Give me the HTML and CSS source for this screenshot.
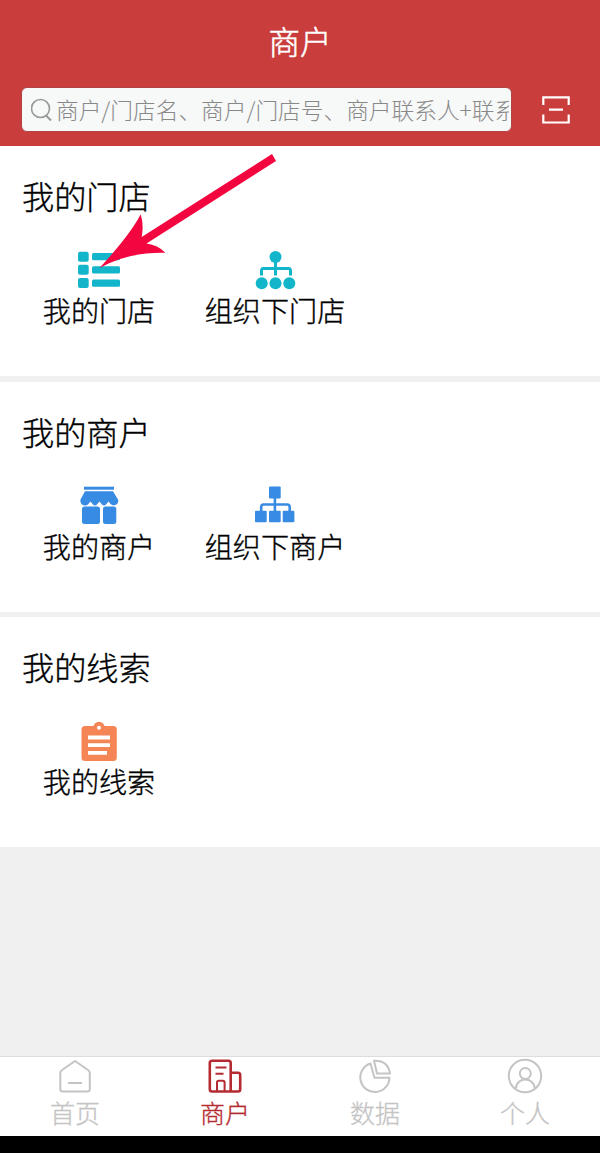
FILE: index.html
```html
<!DOCTYPE html>
<html lang="zh-CN">
<head>
  <meta charset="UTF-8">
  <title>商户</title>
  <link rel="stylesheet" href="styles.css">
</head>
<body>

  <header class="header">
    <h1>商户</h1>
    <div class="search-row">
      <div class="search">
        <svg class="search-icon" width="22" height="24" viewBox="0 0 22 24" fill="none" stroke="#999" stroke-width="1.6">
          <circle cx="9.500" cy="10.500" r="9"/>
          <path d="M15 17.500l5 5" stroke-width="2"/>
        </svg>
        <span class="placeholder">商户/门店名、商户/门店号、商户联系人+联系</span>
      </div>
      <svg class="scan" width="28" height="28" viewBox="0 0 28 28" fill="none" stroke="#fff" stroke-width="2.2">
        <path d="M1.300 9V1.300h25.400V9M1.300 18.500v8h25.400v-8M7 13.700h14"/>
      </svg>
    </div>
  </header>

  <main>
    <section class="card">
      <h2>我的门店</h2>
      <div class="menu">
        <div class="item">
          <svg width="48" height="40" viewBox="0 0 48 40" fill="#12b5c9">
            <rect x="3" y="1.700" width="10.700" height="10" rx="2"/>
            <rect x="3" y="14.800" width="10.700" height="10" rx="2"/>
            <rect x="3" y="28" width="10.700" height="10" rx="2"/>
            <rect x="17" y="3" width="28" height="7.300" rx="1.500"/>
            <rect x="17" y="16.300" width="28" height="7.300" rx="1.500"/>
            <rect x="17" y="29.500" width="28" height="7.300" rx="1.500"/>
          </svg>
          <span>我的门店</span>
        </div>
        <div class="item">
          <svg width="48" height="40" viewBox="0 0 48 40" fill="#12b5c9">
            <circle cx="24.500" cy="7" r="6"/>
            <circle cx="10.700" cy="33.300" r="6"/>
            <circle cx="24.500" cy="33.300" r="6"/>
            <circle cx="38.300" cy="33.300" r="6"/>
            <path d="M24.500 10v15.500M10.500 25.500v-5q0-2 2-2h25q2 0 2 2v5" fill="none" stroke="#12b5c9" stroke-width="3"/>
          </svg>
          <span>组织下门店</span>
        </div>
      </div>
    </section>

    <section class="card">
      <h2>我的商户</h2>
      <div class="menu">
        <div class="item">
          <svg width="48" height="40" viewBox="0 0 48 40" fill="#378be2">
            <rect x="9" y=".700" width="30" height="3"/>
            <path d="M10 5.300h28l5 8.200c1.500 4-3.500 8-7.500 4.500l-2-2.500-2.500 3q-2 1.800-4 0l-2.500-3-2.500 3q-2 1.800-4 0l-2.500-3-2.500 3c-4 3-8.500-1-7.500-5z"/>
            <rect x="7" y="20.500" width="18" height="17.500" rx="2.500"/>
            <rect x="28" y="20.500" width="13.300" height="17.500" rx="2.500"/>
          </svg>
          <span>我的商户</span>
        </div>
        <div class="item">
          <svg width="48" height="40" viewBox="0 0 48 40" fill="#378be2">
            <rect x="18" y=".500" width="11.700" height="12" rx="1"/>
            <rect x="4" y="24.800" width="11.700" height="11.500" rx="1"/>
            <rect x="18" y="24.800" width="11.700" height="11.500" rx="1"/>
            <rect x="31.700" y="24.800" width="11.700" height="11.500" rx="1"/>
            <path d="M23.900 12v14M10.200 26v-5q0-2.500 2.500-2.500h23.500q2.500 0 2.500 2.500v5" fill="none" stroke="#378be2" stroke-width="2.600"/>
          </svg>
          <span>组织下商户</span>
        </div>
      </div>
    </section>

    <section class="card">
      <h2>我的线索</h2>
      <div class="menu">
        <div class="item">
          <svg width="48" height="40" viewBox="0 0 48 40" fill="#f58555">
            <circle cx="24" cy="6.500" r="5.700"/>
            <rect x="6.500" y="5" width="35.300" height="35" rx="3.500"/>
            <circle cx="24" cy="6.800" r="2" fill="#fff"/>
            <path d="M13 16.500h22M13 24.200h22M13 31.900h19" stroke="#fff" stroke-width="3.800"/>
          </svg>
          <span>我的线索</span>
        </div>
      </div>
    </section>
  </main>

  <nav class="tabs">
    <div class="tab">
      <svg width="36" height="36" viewBox="0 0 36 36" fill="none" stroke="currentColor" stroke-width="2">
        <path d="M18 3l13 9q1.800 1.300 1.800 3v16q0 2.500-2.500 2.500h-24.500q-2.500 0-2.500-2.500V15q0-1.700 1.700-3zM11 25h14" stroke-linejoin="round"/>
      </svg>
      <span>首页</span>
    </div>
    <div class="tab active">
      <svg width="36" height="36" viewBox="0 0 36 36" fill="none" stroke="currentColor" stroke-width="2.600">
        <path d="M23.700 33.500V5q0-2.200-2.200-2.200h-16.500q-2.200 0-2.200 2.200v26.300q0 2.200 2.200 2.200h26q2.200 0 2.200-2.200V17q0-2.200-2.200-2.200h-7"/>
        <path d="M8.500 9.500h11M8.500 15.700h8M10 33v-8.500q0-1.800 1.800-1.800h4q1.800 0 1.800 1.800V33" stroke-width="2"/>
      </svg>
      <span>商户</span>
    </div>
    <div class="tab">
      <svg width="36" height="36" viewBox="0 0 36 36" fill="none" stroke="currentColor" stroke-width="2" stroke-linejoin="round">
        <path d="M13.500 5.500A14.600 14.600 0 1 0 32.500 19.800H17.500z"/>
        <path d="M17 2.700Q31 2 33 15.500H20z"/>
      </svg>
      <span>数据</span>
    </div>
    <div class="tab">
      <svg width="36" height="36" viewBox="0 0 36 36" fill="none" stroke="currentColor" stroke-width="2">
        <circle cx="18" cy="18" r="16.200"/>
        <circle cx="18.300" cy="15.500" r="5.500"/>
        <path d="M8.800 30.500c1-12 18-12 19 0"/>
      </svg>
      <span>个人</span>
    </div>
  </nav>

  <svg class="arrow" width="180" height="120" viewBox="0 0 180 120">
    <path d="M1.500 118Q32 85 42.700 64.300Q46 75 43.700 87L174 4L178 11L48.500 93.500Q60 95 67.300 102.700Q30 102 1.500 118z" fill="#f3053f"/>
  </svg>

</body>
</html>
```
FILE: styles.css
```css
* {
  box-sizing: border-box;
}

body {
  margin: 0;
  height: 1153px;
  display: flex;
  flex-direction: column;
  position: relative;
  overflow: hidden;
  background: #f0f0f0;
  color: #000;
  font-family: "Noto Sans CJK SC", sans-serif;
  font-weight: 300;
}

svg {
  display: block;
  flex-shrink: 0;
}

.header {
  height: 146px;
  padding: 20px 30px 0 21px;
  background: #c93d3d;
  color: #fff;
}

h1 {
  margin: 0 -9px 27px 0;
  font-size: 31.5px;
  font-weight: 300;
  line-height: 40px;
  text-align: center;
  -webkit-text-stroke: 0.5px;
}

.search-row {
  display: flex;
  align-items: center;
  justify-content: space-between;
}

.search {
  display: flex;
  align-items: center;
  width: 491px;
  height: 45px;
  padding: 0 2px 0 9px;
  border: 1px solid #b04343;
  border-radius: 6px;
  background: #f7f8f8;
}

.placeholder {
  flex: 1;
  margin-left: 3px;
  overflow: hidden;
  white-space: nowrap;
  color: #888;
  font-size: 22.7px;
  line-height: 34px;
}

.card {
  height: 230px;
  margin-bottom: 5.5px;
  padding: 33px 11px 0;
  background: #fff;
}

h2 {
  margin: 0 0 39px 11px;
  font-size: 32.2px;
  font-weight: 300;
  line-height: 32px;
  -webkit-text-stroke: 0.35px;
}

.menu {
  display: flex;
}

.item {
  display: flex;
  flex-direction: column;
  align-items: center;
  width: 176px;
  font-size: 28.1px;
  line-height: 32px;
  -webkit-text-stroke: 0.35px;
}

.item span {
  margin-top: 4px;
}

.tabs {
  display: flex;
  height: 97px;
  margin-top: auto;
  border-top: 1px solid #ddd;
  border-bottom: 17px solid #000;
  background: #fff;
}

.tab {
  display: flex;
  flex-direction: column;
  align-items: center;
  width: 150px;
  padding-top: 1px;
  color: #c4c4c4;
  font-size: 25px;
  line-height: 36px;
  -webkit-text-stroke: 0.3px;
}

.tab.active {
  color: #b52b32;
}

.arrow {
  position: absolute;
  left: 98px;
  top: 150px;
}
```
